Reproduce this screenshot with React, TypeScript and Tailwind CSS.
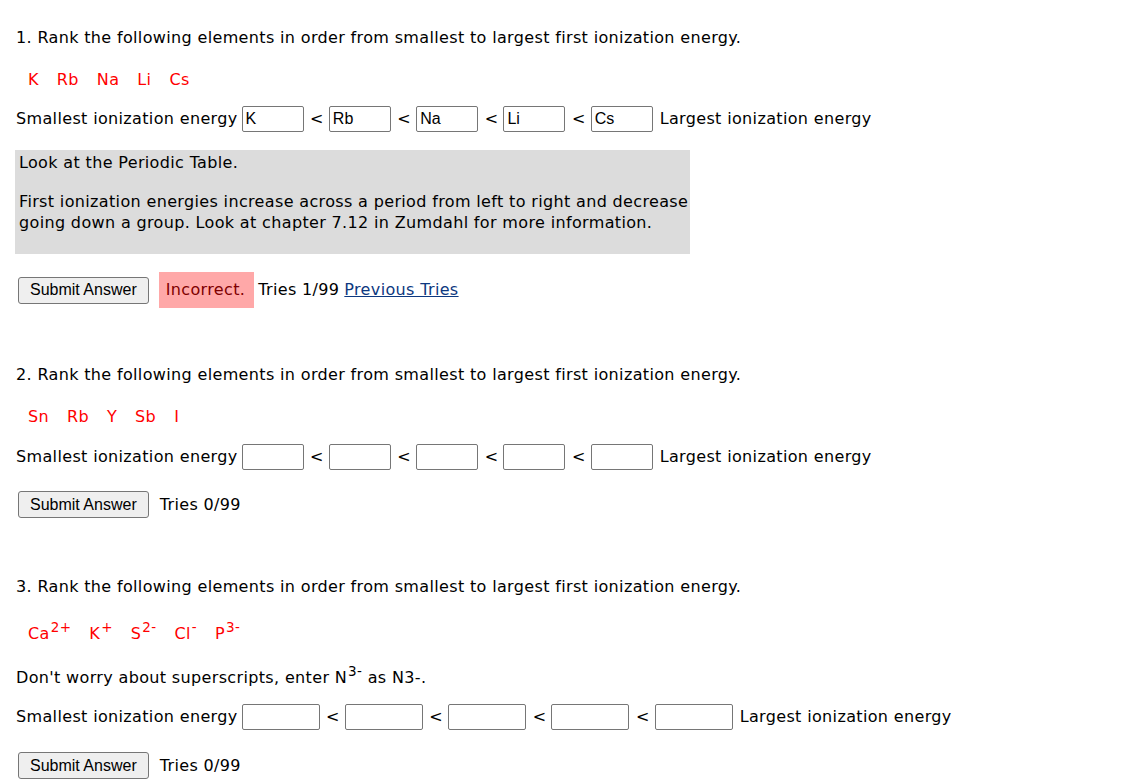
const main = "font-['DejaVu_Sans',Verdana,sans-serif] text-[16px] leading-[20px] tracking-[0.35px] text-black"
const inputCls = "h-[26px] rounded-[2px] border border-[#767676] bg-white px-[3px] font-['Liberation_Sans',Arial,sans-serif] text-[16px] tracking-normal text-black outline-none"
const btnCls = "h-[27px] rounded-[3px] border border-[#767676] bg-[#efefef] px-[11px] font-['Liberation_Sans',Arial,sans-serif] text-[16px] leading-[20px] tracking-normal text-black"

function RankRow({ values, w }: { values: string[]; w: string }) {
  return (
    <div className="flex h-[26px] items-center">
      <span className="mr-[4px]">Smallest ionization energy</span>
      {values.map((v, i) => (
        <div key={i} className="flex items-center">
          {i > 0 && <span className="ml-[6.5px] mr-[5px]">&lt;</span>}
          <input readOnly value={v} className={`${inputCls} ${w}`} />
        </div>
      ))}
      <span className="ml-[7px]">Largest ionization energy</span>
    </div>
  )
}

function Elements({ items }: { items: React.ReactNode[] }) {
  return (
    <div className="ml-[12px] flex h-[20px] gap-[18px] text-[#ff0000]">
      {items.map((it, i) => (
        <span key={i}>{it}</span>
      ))}
    </div>
  )
}

const sup = "ml-[1px] text-[13.5px]"

export default function App() {
  return (
    <div className={`${main} min-h-[784px] bg-white px-[16px]`}>
      {/* Question 1 */}
      <p className="pt-[28px]">1. Rank the following elements in order from smallest to largest first ionization energy.</p>
      <div className="mt-[22px]">
        <Elements items={['K', 'Rb', 'Na', 'Li', 'Cs']} />
      </div>
      <div className="mt-[16px]">
        <RankRow values={['K', 'Rb', 'Na', 'Li', 'Cs']} w="w-[62px]" />
      </div>
      <div className="-ml-[1px] mt-[18px] w-[675px] bg-[#dcdcdc] pb-[21px] pl-[4px] pt-[3px]">
        <p>Look at the Periodic Table.</p>
        <p className="mt-[18px] whitespace-nowrap leading-[21px]">
          First ionization energies increase across a period from left to right and decrease
          <br />
          going down a group. Look at chapter 7.12 in Zumdahl for more information.
        </p>
      </div>
      <div className="mt-[18px] flex h-[36px] items-center">
        <button className={`${btnCls} ml-[2px]`}>Submit Answer</button>
        <span className="ml-[10px] flex h-[36px] items-center bg-[#ffa8a8] pl-[7px] pr-[9px] text-[#800000]">Incorrect.</span>
        <span className="ml-[4px]">Tries 1/99</span>
        <a href="#" className="ml-[5px] text-[#0d3880] underline">Previous Tries</a>
      </div>

      {/* Question 2 */}
      <p className="mt-[57px]">2. Rank the following elements in order from smallest to largest first ionization energy.</p>
      <div className="mt-[22px]">
        <Elements items={['Sn', 'Rb', 'Y', 'Sb', 'I']} />
      </div>
      <div className="mt-[17px]">
        <RankRow values={['', '', '', '', '']} w="w-[62px]" />
      </div>
      <div className="mt-[21px] flex h-[27px] items-center">
        <button className={`${btnCls} ml-[2px]`}>Submit Answer</button>
        <span className="ml-[11px]">Tries 0/99</span>
      </div>

      {/* Question 3 */}
      <p className="mt-[59px]">3. Rank the following elements in order from smallest to largest first ionization energy.</p>
      <div className="mt-[27px]">
        <Elements
          items={[
            <>Ca<sup className={sup}>2+</sup></>,
            <>K<sup className={sup}>+</sup></>,
            <>S<sup className={sup}>2-</sup></>,
            <>Cl<sup className={sup}>-</sup></>,
            <>P<sup className={sup}>3-</sup></>,
          ]}
        />
      </div>
      <p className="mt-[24px] h-[20px]">
        Don't worry about superscripts, enter N<sup className={sup}>3-</sup> as N3-.
      </p>
      <div className="mt-[16px]">
        <RankRow values={['', '', '', '', '']} w="w-[78px]" />
      </div>
      <div className="mt-[22px] flex h-[27px] items-center">
        <button className={`${btnCls} ml-[2px]`}>Submit Answer</button>
        <span className="ml-[11px]">Tries 0/99</span>
      </div>
    </div>
  )
}
